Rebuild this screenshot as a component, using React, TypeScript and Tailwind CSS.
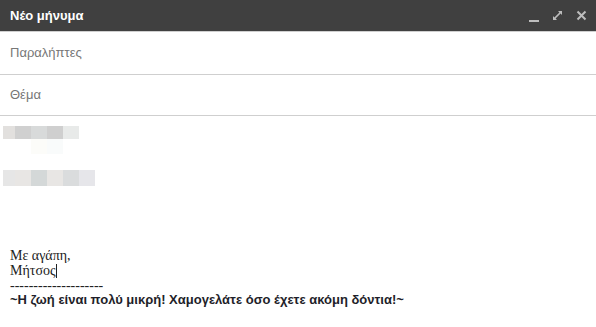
import React from "react";

const row1 = ["#e2e0de", "#d0d0d0", "#d8dada", "#cfcfcf", "#e8eae9"];
const row3 = ["#e6e6e6", "#e8e6e4", "#d4d8d8", "#e8e6e4", "#dadcdd", "#e6e6ea"];

export default function App() {
  return (
    <div className="w-[596px] h-[327px] bg-white overflow-hidden" style={{ fontFamily: '"Liberation Sans", Arial, sans-serif' }}>
      <div className="h-[31px] bg-[#404040] flex items-center pl-[10px] pr-[9px]">
        <span className="text-white font-bold text-[13px] flex-1">Νέο μήνυμα</span>
        <div className="flex items-center gap-[13px]">
          <svg width="11" height="12" viewBox="0 0 11 12" className="mt-[2px]">
            <rect x="1" y="9" width="10" height="2" fill="#bdbdbd" />
          </svg>
          <svg width="11" height="11" viewBox="0 0 11 11">
            <path d="M6 1h4v4L8.6 3.6 3.6 8.6 5 10H1V6l1.4 1.4 5-5z" fill="#bdbdbd" />
          </svg>
          <svg width="11" height="11" viewBox="0 0 11 11">
            <path d="M1.5 1.5l8 8M9.5 1.5l-8 8" stroke="#bdbdbd" strokeWidth="2" />
          </svg>
        </div>
      </div>
      <div className="h-[1px] bg-[#cfcfcf]" />
      <div className="h-[43px] border-b border-[#cfcfcf] flex items-center pl-[10px]">
        <span className="text-[13px] text-[#777777]">Παραλήπτες</span>
      </div>
      <div className="h-[41px] border-b border-[#cfcfcf] flex items-center pl-[10px]">
        <span className="text-[13px] text-[#777777]">Θέμα</span>
      </div>
      <div className="pt-[10px] pl-[3px]">
        <div className="flex h-[13px]">
          {row1.map((c, i) => (
            <div key={i} className={i === 0 ? "w-[12px]" : "w-[16px]"} style={{ backgroundColor: c }} />
          ))}
        </div>
        <div className="flex h-[15px] pl-[28px]">
          <div className="w-[16px] bg-[#fcfcf9]" />
          <div className="w-[16px] bg-[#f9fbfb]" />
        </div>
        <div className="flex h-[16px] mt-[16px]">
          {row3.map((c, i) => (
            <div key={i} className={i === 0 ? "w-[12px]" : "w-[16px]"} style={{ backgroundColor: c }} />
          ))}
        </div>
      </div>
      <div className="pl-[10px] pt-[62px]">
        <div className="text-[14px] leading-[15px] text-[#222222]" style={{ fontFamily: '"Liberation Serif", "Times New Roman", serif' }}>
          <div>Με αγάπη,</div>
          <div className="flex items-center">
            <span>Μήτσος</span>
            <span className="inline-block w-[1px] h-[14px] bg-[#222222]" />
          </div>
          <div>--------------------</div>
        </div>
        <div className="text-[13px] font-bold leading-[14px] text-[#1f1f2a]">
          ~Η ζωή είναι πολύ μικρή! Χαμογελάτε όσο έχετε ακόμη δόντια!~
        </div>
      </div>
    </div>
  );
}
